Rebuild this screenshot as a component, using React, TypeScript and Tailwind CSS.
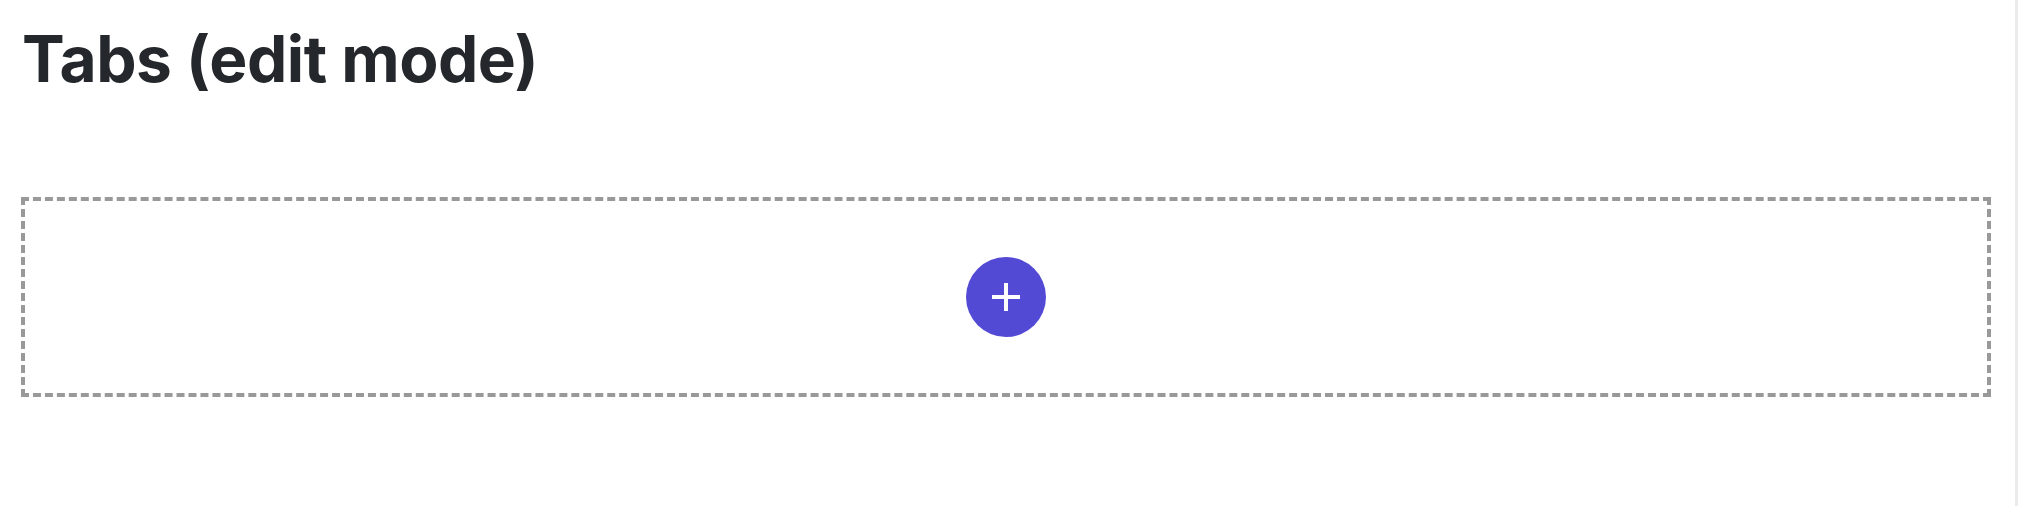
export default function App() {
  return (
    <div className="flex h-[506px] w-full bg-white">
      <main className="flex-1 pl-[21px] pr-[24px]">
        <h1
          className="pt-[19px] pl-[1px] text-[64px] font-bold leading-[80px] tracking-[-0.5px] text-[#24272b]"
          style={{ fontFamily: '"Inter", "Noto Sans", sans-serif' }}
        >
          Tabs (edit mode)
        </h1>
        <div className="mt-[98px] flex h-[200px] items-center justify-center border-4 border-dashed border-[#999999]">
          <button
            type="button"
            aria-label="Add tab"
            className="flex h-[80px] w-[80px] items-center justify-center rounded-full bg-[#5249d4]"
          >
            <svg width="28" height="28" viewBox="0 0 28 28" fill="none">
              <path d="M14 0v28M0 14h28" stroke="white" strokeWidth="4" />
            </svg>
          </button>
        </div>
      </main>
      {/* scrollbar edge */}
      <div className="w-[3px] bg-[#ebebeb]" />
    </div>
  );
}
